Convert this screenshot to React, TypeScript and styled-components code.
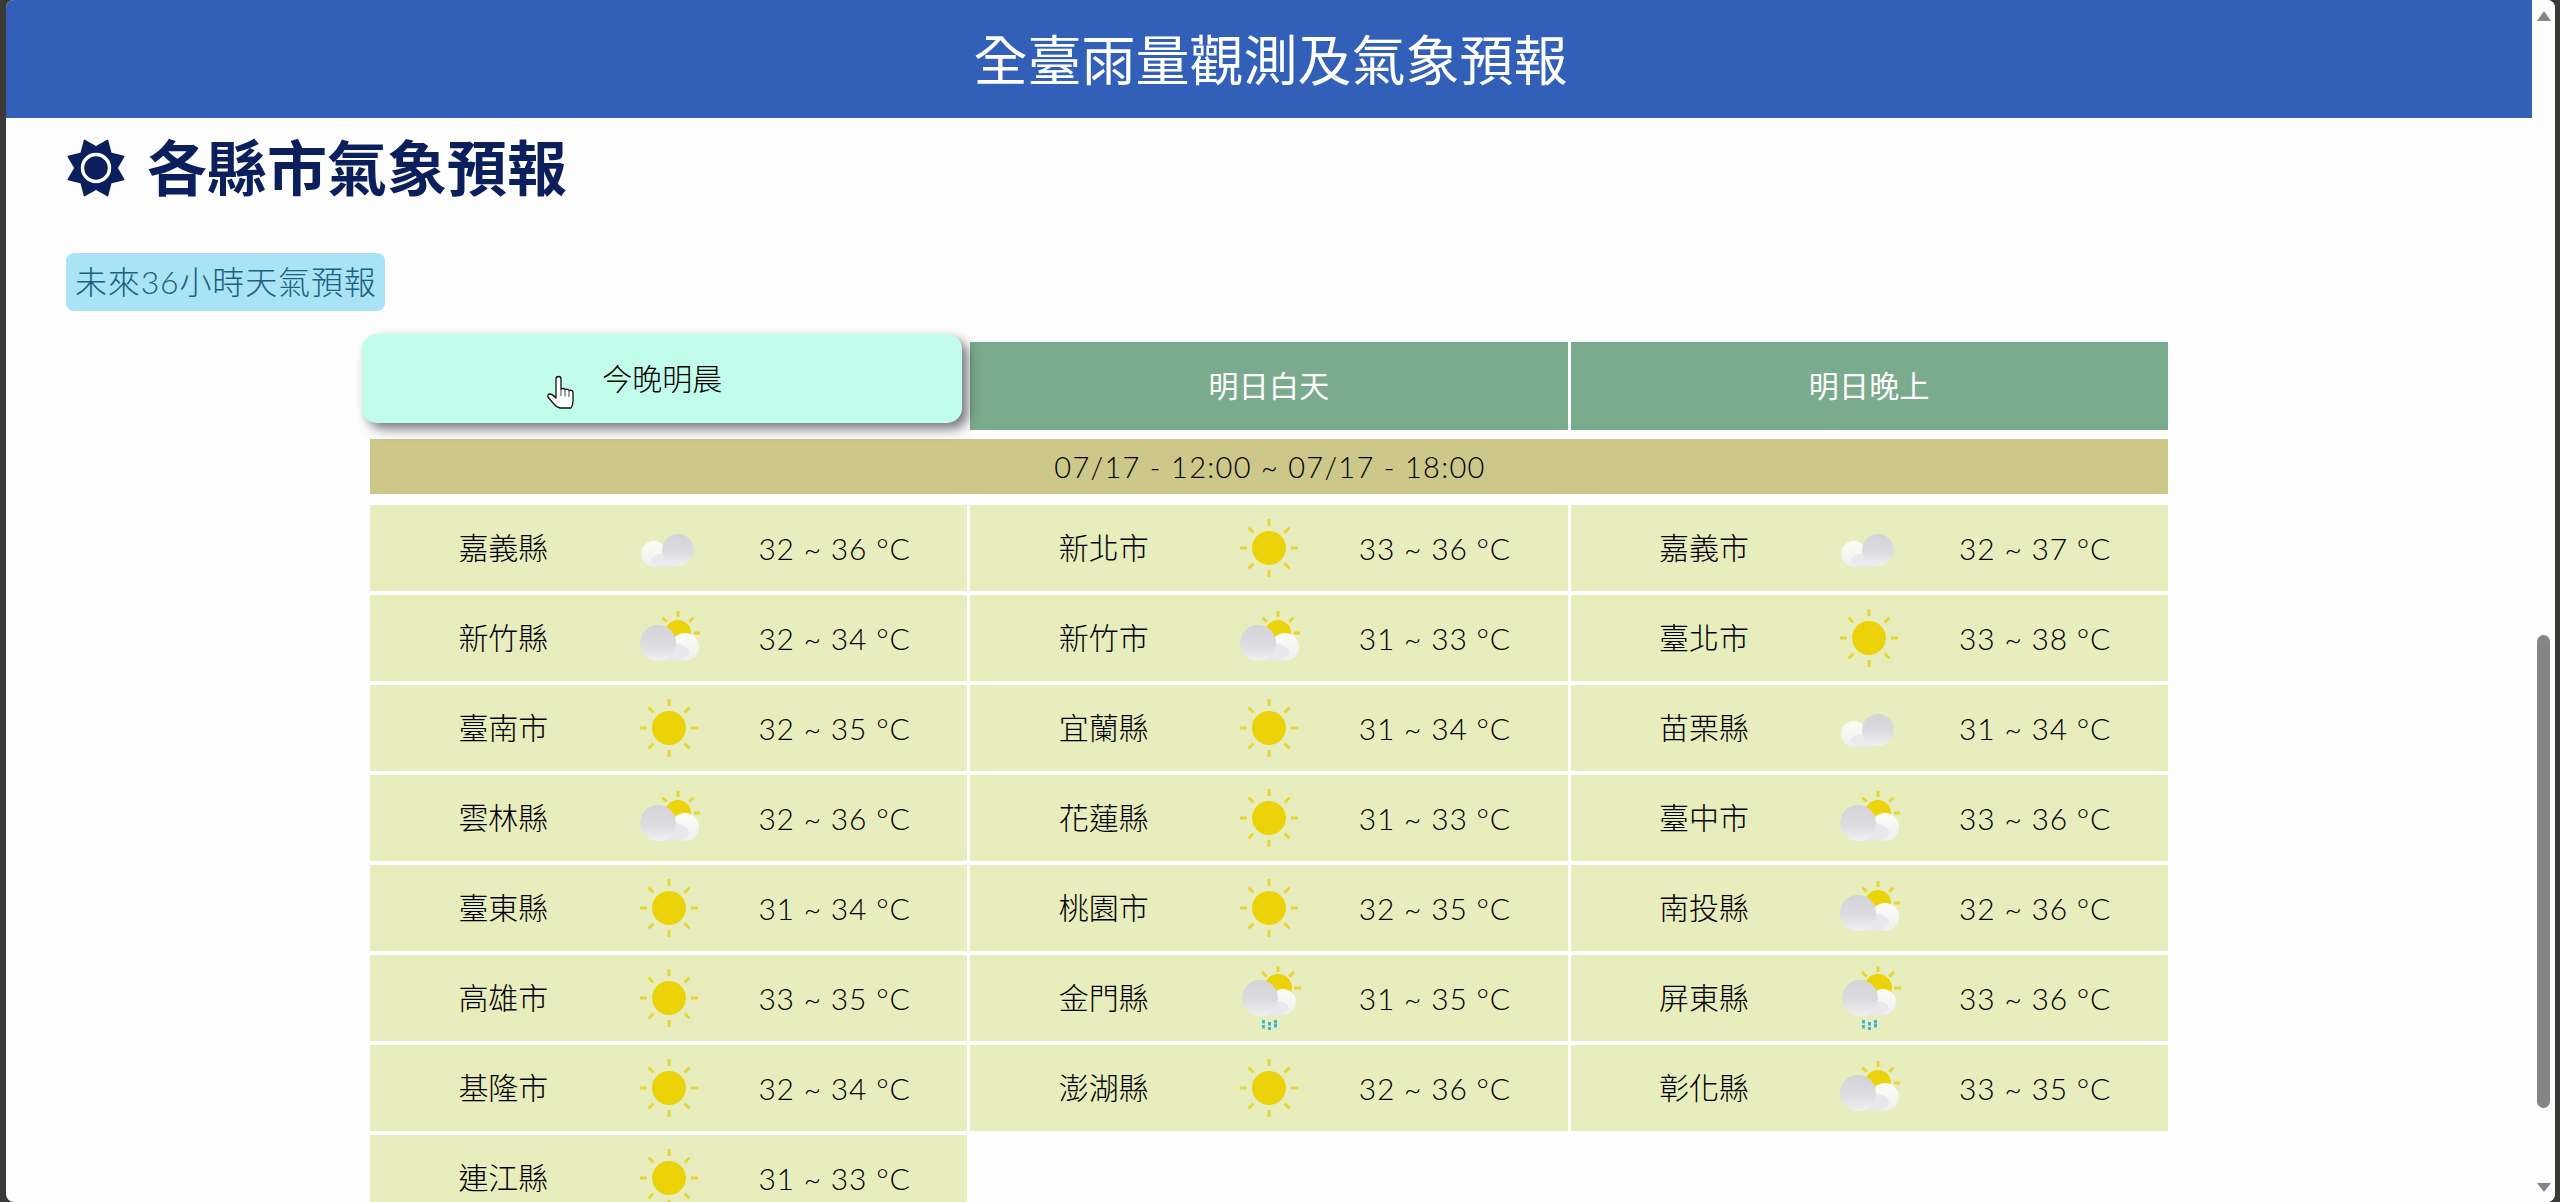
import React from "react";
import styled, { createGlobalStyle } from "styled-components";

const Global = createGlobalStyle`
  html, body { margin: 0; padding: 0; height: 100%; overflow: hidden; background: #3b3a36; }
  * { box-sizing: border-box; }
  body { font-family: "Lato", "Noto Sans CJK TC", sans-serif; font-weight: 300; }
`;

const Frame = styled.div`
  display: flex;
  height: 1202px;
  margin: 0 5px 0 6px;
  background: #fefefe;
  border-radius: 8px;
  overflow: hidden;
`;
const Main = styled.main`
  flex: 1;
  min-width: 0;
`;
const Header = styled.header`
  height: 118px;
  background: #3260b8;
  color: #fff;
  display: flex;
  align-items: center;
  justify-content: center;
  font-size: 54px;
  font-weight: 400;
  line-height: 1;
  padding: 4px 0 0 3px;
`;
const Section = styled.section`
  padding: 20px 0 0 60px;
`;
const TitleRow = styled.h2`
  display: flex;
  align-items: center;
  gap: 21px;
  margin: 0;
  height: 60px;
  font-size: 60px;
  line-height: 60px;
  font-weight: 700;
  color: #0a1f5c;
`;
const Chip = styled.div`
  width: 319px;
  height: 58px;
  margin-top: 55px;
  padding: 0 0 4px 9px;
  display: flex;
  align-items: center;
  background: #aae3f5;
  color: #1c5f7e;
  border-radius: 8px;
  font-size: 32px;
  letter-spacing: 0.85px;
  white-space: nowrap;
`;
const Board = styled.div`
  width: 1798px;
  margin: 31px 0 0 304px;
`;
const Grid = styled.div`
  display: grid;
  grid-template-columns: repeat(3, 1fr);
  gap: 4px 3px;
  align-items: start;
`;
const Tab = styled.div<{ $active?: boolean }>`
  height: 88px;
  padding-bottom: 4px;
  display: flex;
  align-items: center;
  justify-content: center;
  font-size: 30px;
  font-weight: ${(p) => (p.$active ? 300 : 400)};
  letter-spacing: ${(p) => (p.$active ? "0" : "0.3px")};
  color: ${(p) => (p.$active ? "#000" : "#fff")};
  background: ${(p) => (p.$active ? "#c2fdec" : "#7aab8c")};
  ${(p) =>
    p.$active &&
    `
    position: relative;
    width: calc(100% + 3px);
    height: 89px;
    margin-bottom: -1px;
    transform: translate(-8px, -8px);
    border-radius: 15px;
    box-shadow: 6px 6px 12px rgba(30, 30, 40, 0.6);
  `}
`;
const DateBar = styled.div`
  height: 55px;
  margin: 9px 0 11px;
  padding-left: 2px;
  background: #cdc78a;
  color: #000;
  display: flex;
  align-items: center;
  justify-content: center;
  font-size: 29px;
  letter-spacing: 1.3px;
`;
const Cell = styled.div`
  height: 86px;
  padding: 0 50px;
  display: grid;
  grid-template-columns: repeat(3, 1fr);
  align-items: center;
  justify-items: center;
  background: #e8edbe;
  color: #000;
  font-size: 30px;
  white-space: nowrap;
`;
const City = styled.span`
  padding: 0 0 4px 1px;
`;
const Temp = styled.span`
  letter-spacing: 0.8px;
`;
const Cursor = styled.svg`
  position: absolute;
  left: 168px;
  top: 31px;
  width: 60px;
  height: 55px;
`;
const Scrollbar = styled.div`
  width: 23px;
  flex: none;
  display: flex;
  flex-direction: column;
  align-items: center;
  padding-top: 11px;
  background: #fdfdff;
`;
const Arrow = styled.div<{ $down?: boolean }>`
  width: 0;
  height: 0;
  border-left: 7.5px solid transparent;
  border-right: 7.5px solid transparent;
  ${(p) =>
    p.$down
      ? "border-top: 9px solid #858585; margin-top: 75px;"
      : "border-bottom: 10px solid #858585;"}
`;
const Thumb = styled.div`
  width: 13px;
  height: 473px;
  margin-top: 614px;
  border-radius: 7px;
  background: #858585;
`;

const YEL = "#ecd208";
const RAY = "#e6d538";

const rays = (cx: number, cy: number, r1: number, r2: number, angles: number[]) =>
  angles.map((a) => {
    const t = (a * Math.PI) / 180;
    return (
      <line
        key={a}
        x1={cx + r1 * Math.cos(t)}
        y1={cy + r1 * Math.sin(t)}
        x2={cx + r2 * Math.cos(t)}
        y2={cy + r2 * Math.sin(t)}
        stroke={RAY}
        strokeWidth="3"
      />
    );
  });

type Kind = "sun" | "cloud" | "suncloud" | "rain";

const Weather = ({ kind }: { kind: Kind }) => (
  <svg width="64" height="64" viewBox="0 0 64 64">
    <defs>
      <linearGradient id="cloudShade" x1="0" y1="0" x2="0" y2="1">
        <stop offset="0" stopColor="#d4d4d8" />
        <stop offset="0.55" stopColor="#dcdce0" />
        <stop offset="1" stopColor="#f0f0f0" />
      </linearGradient>
      <linearGradient id="cloudWhite" x1="0" y1="0" x2="0" y2="1">
        <stop offset="0" stopColor="#fdfdf8" />
        <stop offset="1" stopColor="#eeeeee" />
      </linearGradient>
    </defs>
    {kind === "sun" && (
      <>
        {rays(32, 32, 22, 29, [0, 45, 90, 135, 180, 225, 270, 315])}
        <circle cx="32" cy="32" r="17" fill={YEL} />
      </>
    )}
    {kind === "cloud" && (
      <>
        <circle cx="17" cy="38" r="13" fill="url(#cloudWhite)" />
        <ellipse cx="30" cy="44" rx="16" ry="7" fill="#eaeaec" />
        <circle cx="41" cy="34" r="16" fill="url(#cloudShade)" />
      </>
    )}
    {kind === "suncloud" && (
      <>
        {rays(41, 27, 16, 22, [-135, -90, -45, 0])}
        <circle cx="41" cy="27" r="13" fill={YEL} />
        <circle cx="48" cy="41" r="14" fill="url(#cloudWhite)" />
        <ellipse cx="34" cy="46" rx="18" ry="9" fill="#e8e8ec" />
        <circle cx="21" cy="37" r="18" fill="url(#cloudShade)" />
      </>
    )}
    {kind === "rain" && (
      <>
        {rays(41, 22, 16, 23, [-135, -90, -45, 0])}
        <circle cx="41" cy="22" r="14" fill={YEL} />
        <circle cx="46" cy="36" r="13" fill="url(#cloudWhite)" />
        <ellipse cx="34" cy="42" rx="17" ry="8" fill="#e8e8ec" />
        <circle cx="23" cy="32" r="18" fill="url(#cloudShade)" />
        {[
          [25, 54],
          [25, 59],
          [31, 56],
          [31, 61],
          [37, 54],
          [37, 58],
        ].map(([x, y]) => (
          <rect key={`${x}-${y}`} x={x} y={y} width="3" height="3.5" fill="#35b8dc" />
        ))}
      </>
    )}
  </svg>
);

const TitleIcon = () => {
  const pts: string[] = [];
  for (let i = 0; i < 16; i++) {
    const a = (i * 22.5 - 90 + 22.5) * (Math.PI / 180);
    const r = i % 2 === 0 ? 30 : 21;
    pts.push(`${30 + r * Math.cos(a)},${30 + r * Math.sin(a)}`);
  }
  return (
    <svg width="60" height="60" viewBox="0 0 60 60">
      <polygon points={pts.join(" ")} fill="#0a1f5c" stroke="#0a1f5c" strokeWidth="1.5" strokeLinejoin="round" />
      <circle cx="30" cy="30" r="13.5" fill="#0a1f5c" stroke="#fff" strokeWidth="3.5" />
    </svg>
  );
};

const data: [string, Kind, string][] = [
  ["嘉義縣", "cloud", "32 ~ 36 °C"],
  ["新北市", "sun", "33 ~ 36 °C"],
  ["嘉義市", "cloud", "32 ~ 37 °C"],
  ["新竹縣", "suncloud", "32 ~ 34 °C"],
  ["新竹市", "suncloud", "31 ~ 33 °C"],
  ["臺北市", "sun", "33 ~ 38 °C"],
  ["臺南市", "sun", "32 ~ 35 °C"],
  ["宜蘭縣", "sun", "31 ~ 34 °C"],
  ["苗栗縣", "cloud", "31 ~ 34 °C"],
  ["雲林縣", "suncloud", "32 ~ 36 °C"],
  ["花蓮縣", "sun", "31 ~ 33 °C"],
  ["臺中市", "suncloud", "33 ~ 36 °C"],
  ["臺東縣", "sun", "31 ~ 34 °C"],
  ["桃園市", "sun", "32 ~ 35 °C"],
  ["南投縣", "suncloud", "32 ~ 36 °C"],
  ["高雄市", "sun", "33 ~ 35 °C"],
  ["金門縣", "rain", "31 ~ 35 °C"],
  ["屏東縣", "rain", "33 ~ 36 °C"],
  ["基隆市", "sun", "32 ~ 34 °C"],
  ["澎湖縣", "sun", "32 ~ 36 °C"],
  ["彰化縣", "suncloud", "33 ~ 35 °C"],
  ["連江縣", "sun", "31 ~ 33 °C"],
];

export default function App() {
  return (
    <>
      <Global />
      <Frame>
        <Main>
          <Header>全臺雨量觀測及氣象預報</Header>
          <Section>
            <TitleRow>
              <TitleIcon />
              各縣市氣象預報
            </TitleRow>
            <Chip>未來36小時天氣預報</Chip>
            <Board>
              <Grid>
                <Tab $active>
                  今晚明晨
                  <Cursor viewBox="0 0 60 55">
                    <path
                      d="M26 14q0-2.500 2.500-2.500t2.500 2.500v10q3-1.200 4 .5q3-1.200 4 1q3-1 4 1.500v9q0 4-2 7H30q-4-1-7-5l-5-6q-1-3 2-3q2 0 6 4z"
                      fill="#fff"
                      stroke="#111"
                      strokeWidth="1.3"
                      strokeLinejoin="round"
                    />
                    <path d="M31 24v7M35 24.500v7M39 26v6" stroke="#111" strokeWidth="0.8" fill="none" />
                  </Cursor>
                </Tab>
                <Tab>明日白天</Tab>
                <Tab>明日晚上</Tab>
              </Grid>
              <DateBar>07/17 - 12:00 ~ 07/17 - 18:00</DateBar>
              <Grid>
                {data.map(([city, kind, temp]) => (
                  <Cell key={city}>
                    <City>{city}</City>
                    <Weather kind={kind} />
                    <Temp>{temp}</Temp>
                  </Cell>
                ))}
              </Grid>
            </Board>
          </Section>
        </Main>
        <Scrollbar>
          <Arrow />
          <Thumb />
          <Arrow $down />
        </Scrollbar>
      </Frame>
    </>
  );
}
